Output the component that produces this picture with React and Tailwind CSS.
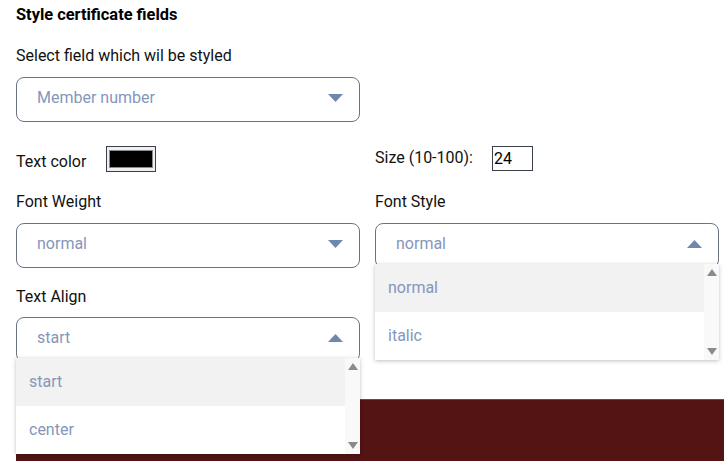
import React from "react";

const Caret = ({ up }) => (
  <svg width="15" height="8" viewBox="0 0 15 8" className="shrink-0">
    {up ? (
      <path d="M0 8 L7.5 0 L15 8 Z" fill="#6f86ad" />
    ) : (
      <path d="M0 0 L7.5 8 L15 0 Z" fill="#6f86ad" />
    )}
  </svg>
);

const Select = ({ value, up, children }) => (
  <div className="relative">
    <div className="h-[45px] rounded-[8px] border border-[#6b7383] bg-white flex items-center justify-between pl-[20px] pr-[16px] pb-[3px]">
      <span className="text-[16px] text-[#8596bb]">{value}</span>
      <Caret up={up} />
    </div>
    {children}
  </div>
);

const ListBox = ({ items }) => (
  <div className="absolute left-0 right-0 top-[41px] z-10 flex bg-white shadow-[0_1px_4px_rgba(0,0,0,0.25)]">
    <div className="flex-1 flex flex-col">
      {items.map((it, i) => (
        <div
          key={it}
          className={`h-[48px] flex items-center pl-[13px] text-[16px] text-[#8596bb] ${i === 0 ? "bg-[#f2f2f2]" : "bg-white"}`}
        >
          {it}
        </div>
      ))}
    </div>
    <div className="w-[15px] bg-[#f9f9f9] flex flex-col justify-between items-center py-[5px]">
      <svg width="10" height="7" viewBox="0 0 10 7">
        <path d="M0 7 L5 0 L10 7 Z" fill="#8b8b8b" />
      </svg>
      <svg width="10" height="7" viewBox="0 0 10 7">
        <path d="M0 0 L5 7 L10 0 Z" fill="#8b8b8b" />
      </svg>
    </div>
  </div>
);

export default function App() {
  return (
    <div
      className="w-[724px] h-[461px] overflow-hidden bg-white text-[#111]"
      style={{ fontFamily: "Roboto, 'Noto Sans', sans-serif" }}
    >
      <div className="pl-[16px] pr-[5px] pt-[5px]">
        <h2 className="text-[16.4px] font-bold leading-[20px] text-black">Style certificate fields</h2>
        <div className="mt-[21px] text-[16px] leading-[20px]">Select field which wil be styled</div>
        <div className="mt-[11px] w-[344px]">
          <Select value="Member number" />
        </div>

        <div className="mt-[24px] grid grid-cols-[344px_344px] gap-x-[15px]">
          <div className="h-[26px] flex items-center">
            <span className="text-[16px] mt-[6px]">Text color</span>
            <div className="ml-[20px] w-[50px] h-[26px] border border-[#3a3f4d] bg-[#efefef] flex items-center justify-center">
              <div className="w-[44px] h-[18px] bg-black border border-[#8a8a8a]" />
            </div>
          </div>
          <div className="h-[26px] flex items-start">
            <span className="text-[16px] leading-[24px]">Size (10-100):</span>
            <div className="ml-[19px] w-[41px] h-[25px] border border-[#3a3f4d] flex items-center pl-[1px] text-[16px] text-black">
              24
            </div>
          </div>

          <div className="mt-[20px] text-[16px] leading-[20px]">Font Weight</div>
          <div className="mt-[20px] text-[16px] leading-[20px]">Font Style</div>

          <div className="mt-[11px]">
            <Select value="normal" />
          </div>
          <div className="mt-[11px] relative z-20">
            <Select value="normal" up>
              <ListBox items={["normal", "italic"]} />
            </Select>
          </div>

          <div className="mt-[19px] text-[16px] leading-[20px]">Text Align</div>
          <div />
          <div className="mt-[10px] relative z-20">
            <Select value="start" up>
              <ListBox items={["start", "center"]} />
            </Select>
          </div>
          <div />
        </div>
      </div>
      <div className="mt-[37px] ml-[16px] h-[80px] bg-[#541414] border-t border-[#6a4a4a]" />
    </div>
  );
}
